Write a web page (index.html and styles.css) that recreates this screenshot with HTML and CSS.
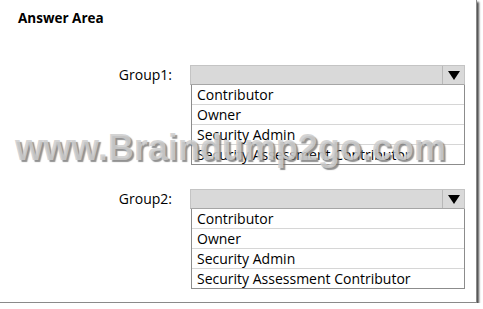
FILE: index.html
```html
<!DOCTYPE html>
<html lang="en">
<head>
    <meta charset="UTF-8">
    <meta name="viewport" content="width=device-width, initial-scale=1.0">
    <title>Answer Area</title>
    <link rel="stylesheet" href="styles.css">
</head>
<body>
    <div class="frame">
        <h1 class="title">Answer Area</h1>

        <div class="group">
            <div class="label">Group1:</div>
            <div class="dropdown">
                <div class="select">
                    <span class="arrow"></span>
                </div>
                <ul class="options">
                    <li>Contributor</li>
                    <li>Owner</li>
                    <li>Security Admin</li>
                    <li>Security Assessment Contributor</li>
                </ul>
            </div>
        </div>

        <div class="group">
            <div class="label">Group2:</div>
            <div class="dropdown">
                <div class="select">
                    <span class="arrow"></span>
                </div>
                <ul class="options">
                    <li>Contributor</li>
                    <li>Owner</li>
                    <li>Security Admin</li>
                    <li>Security Assessment Contributor</li>
                </ul>
            </div>
        </div>

        <div class="watermark">www.Braindump2go.com</div>
    </div>
</body>
</html>
```

FILE: styles.css
```css
body {
    margin: 0;
    padding: 0;
    background: #ffffff;
    font-family: "Open Sans", "Noto Sans", sans-serif;
    color: #000000;
}

.frame {
    position: relative;
    box-sizing: border-box;
    width: 477px;
    height: 303px;
    padding: 10px 0 0 18px;
    background: #ffffff;
    border-right: 1px solid #8a8a8a;
    border-bottom: 1px solid #8a8a8a;
    box-shadow: 2px 2px 2px rgba(0, 0, 0, 0.7);
}

.title {
    margin: 0 0 39px 0;
    font-size: 13.5px;
    line-height: 16px;
    font-weight: bold;
}

.group {
    display: flex;
    align-items: flex-start;
    gap: 18px;
    margin-left: 82px;
    margin-bottom: 24px;
}

.label {
    width: 72px;
    text-align: right;
    font-size: 14px;
    line-height: 20px;
}

.dropdown {
    width: 275px;
}

.select {
    box-sizing: border-box;
    height: 20px;
    background: #d9d9d9;
    border: 1px solid #c4c4c4;
    border-bottom-color: #a6a6a6;
    display: flex;
    justify-content: flex-end;
}

.arrow {
    box-sizing: border-box;
    width: 22px;
    border-left: 1px solid #b8b8b8;
    position: relative;
}

/* triangle inside the button cell */
.arrow::after {
    content: "";
    position: absolute;
    left: 5px;
    top: 5px;
    border-left: 6px solid transparent;
    border-right: 6px solid transparent;
    border-top: 9px solid #000000;
}

.options {
    list-style: none;
    margin: 0 0 0 1px;
    padding: 0;
    border: 1px solid #8c8c8c;
    border-top: none;
}

.options li {
    height: 19px;
    line-height: 19px;
    padding-left: 5px;
    font-size: 14px;
    border-bottom: 1px solid #d6d6d6;
}

.options li:last-child {
    border-bottom: none;
}

.watermark {
    position: absolute;
    left: 15px;
    top: 130px;
    font-family: "Liberation Sans", Arial, sans-serif;
    font-weight: bold;
    font-size: 36px;
    line-height: 36px;
    color: rgba(205, 205, 205, 0.85);
    text-shadow: 2px 2px 1px rgba(110, 110, 110, 0.75);
    white-space: nowrap;
}
```
